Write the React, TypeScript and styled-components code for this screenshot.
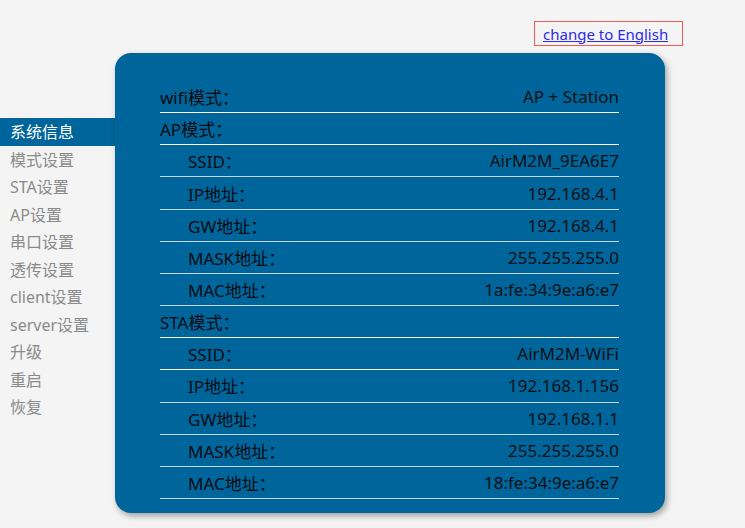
import React from 'react'
import styled, { createGlobalStyle } from 'styled-components'

const GlobalStyle = createGlobalStyle`
  html, body {
    margin: 0;
    padding: 0;
    background: #f4f4f4;
    font-family: 'Noto Sans', 'Noto Sans CJK SC', sans-serif;
  }
`

const Page = styled.div`
  width: 745px;
  height: 528px;
  overflow: hidden;
`

const TopBar = styled.div`
  display: flex;
  justify-content: flex-end;
  padding: 21px 62px 0 0;
`

const LangBox = styled.div`
  box-sizing: border-box;
  width: 149px;
  height: 25px;
  border: 1px solid #ee5a5a;
  padding-left: 8px;
  display: flex;
  align-items: center;
`

const LangLink = styled.a`
  color: #2b2bee;
  font-size: 15px;
  text-decoration: underline;
  cursor: pointer;
`

const Main = styled.div`
  display: flex;
  margin-top: 7px;
`

const Sidebar = styled.ul`
  list-style: none;
  margin: 65px 0 0;
  padding: 0;
  width: 115px;
`

const MenuItem = styled.li<{ $active?: boolean }>`
  box-sizing: border-box;
  height: 27.5px;
  line-height: 27.5px;
  padding: 1px 0 0 10px;
  font-size: 16px;
  color: ${(p) => (p.$active ? '#ffffff' : '#8a8a8a')};
  background: ${(p) => (p.$active ? '#00659a' : 'transparent')};
  cursor: pointer;
`

const Panel = styled.div`
  box-sizing: border-box;
  width: 550px;
  height: 460px;
  background: #00659a;
  border-radius: 16px;
  box-shadow: 2px 3px 6px rgba(0, 0, 0, 0.35);
  padding: 28px 46px 0 45px;
`

const Row = styled.div<{ $indent?: boolean; $bright?: boolean }>`
  box-sizing: border-box;
  height: 32.17px;
  display: flex;
  align-items: center;
  justify-content: space-between;
  border-bottom: 1px solid ${(p) => (p.$bright ? '#ffffff' : '#c4d8e6')};
  padding-left: ${(p) => (p.$indent ? '28px' : '0')};
  font-size: 17px;
  color: #050a10;
`

const Value = styled.span`
  color: #0a0f14;
`

type Item = { label: string; value?: string; indent?: boolean; bright?: boolean }

const rows: Item[] = [
  { label: 'wifi模式：', value: 'AP + Station', bright: true },
  { label: 'AP模式：', bright: true },
  { label: 'SSID：', value: 'AirM2M_9EA6E7', indent: true },
  { label: 'IP地址：', value: '192.168.4.1', indent: true },
  { label: 'GW地址：', value: '192.168.4.1', indent: true },
  { label: 'MASK地址：', value: '255.255.255.0', indent: true },
  { label: 'MAC地址：', value: '1a:fe:34:9e:a6:e7', indent: true },
  { label: 'STA模式：', bright: true },
  { label: 'SSID：', value: 'AirM2M-WiFi', indent: true, bright: true },
  { label: 'IP地址：', value: '192.168.1.156', indent: true },
  { label: 'GW地址：', value: '192.168.1.1', indent: true },
  { label: 'MASK地址：', value: '255.255.255.0', indent: true },
  { label: 'MAC地址：', value: '18:fe:34:9e:a6:e7', indent: true },
]

const menu = ['系统信息', '模式设置', 'STA设置', 'AP设置', '串口设置', '透传设置', 'client设置', 'server设置', '升级', '重启', '恢复']

export default function App() {
  return (
    <Page>
      <GlobalStyle />
      <TopBar>
        <LangBox>
          <LangLink>change to English</LangLink>
        </LangBox>
      </TopBar>
      <Main>
        <Sidebar>
          {menu.map((m, i) => (
            <MenuItem key={m} $active={i === 0}>
              {m}
            </MenuItem>
          ))}
        </Sidebar>
        <Panel>
          {rows.map((r, i) => (
            <Row key={i} $indent={r.indent} $bright={r.bright}>
              <span>{r.label}</span>
              {r.value && <Value>{r.value}</Value>}
            </Row>
          ))}
        </Panel>
      </Main>
    </Page>
  )
}
